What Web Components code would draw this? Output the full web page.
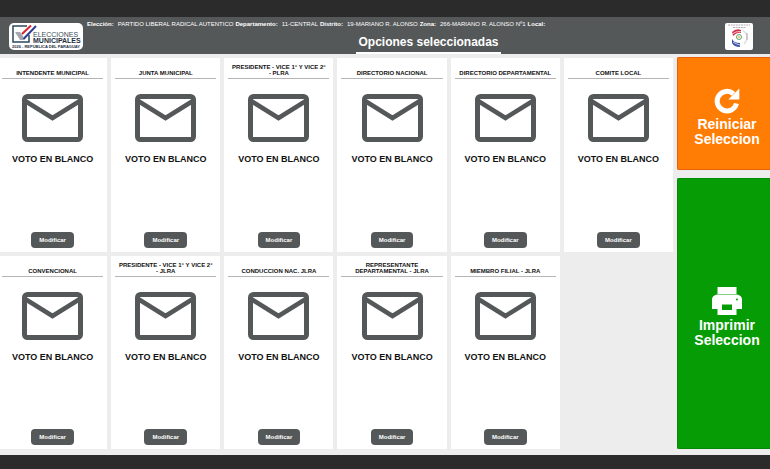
<!DOCTYPE html>
<html lang="es">
<head>
<meta charset="utf-8">
<meta name="viewport" content="width=device-width, initial-scale=1">
<title>Opciones seleccionadas</title>
<style>
  body {
    margin: 0;
    font-family: "Liberation Sans", Arial, sans-serif;
    background: #2b2b2b;
  }
</style>
</head>
<body>
<voting-app></voting-app>

<script>
class ElectionLogo extends HTMLElement {
  constructor() {
    super();
    this.attachShadow({ mode: 'open' });
  }

  connectedCallback() {
    this.shadowRoot.innerHTML = `
      <style>
        :host {
          display: block;
          width: 74px;
          height: 27px;
          border-radius: 5px;
          background: #fff;
        }
        svg { display: block; }
        text { font-family: "Liberation Sans", Arial, sans-serif; }
      </style>
      <svg width="74" height="27" viewBox="0 0 74 27" role="img" aria-label="Elecciones Municipales">
        <path d="M18 3H4v16h16v-7" fill="none" stroke="#2c4a5c" stroke-width="1.5"/>
        <path d="M6 9h5l3 4 1 4h-4z" fill="#a3a8ad"/>
        <path d="M13 11L22 2.500" stroke="#d8232f" stroke-width="2"/>
        <path d="M14.500 16L27 3" stroke="#2d3f96" stroke-width="2"/>
        <text x="24" y="14" font-size="7" fill="#3c4b57">ELECCIONES</text>
        <text x="24" y="20" font-size="7" font-weight="bold" fill="#1d2f3f">MUNICIPALES</text>
        <text x="3" y="25" font-size="4" font-weight="bold" fill="#1d2f3f">2026 - REPÚBLICA DEL PARAGUAY</text>
      </svg>
    `;
  }
}

class PartyLogo extends HTMLElement {
  constructor() {
    super();
    this.attachShadow({ mode: 'open' });
  }

  connectedCallback() {
    this.shadowRoot.innerHTML = `
      <style>
        :host {
          display: block;
          width: 28px;
          height: 27px;
          border-radius: 2px;
          background: #fff;
        }
        svg { display: block; }
      </style>
      <svg width="28" height="27" viewBox="0 0 28 27" role="img" aria-label="Logo">
        <path d="M3 2h22M8 4.500h13" stroke="#b9adb5" stroke-width="1" stroke-dasharray="2 .6"/>
        <path d="M7 9q4-4 9-2v3q-4-1-8 3z" fill="#d5304a"/>
        <path d="M7 11q4-3 9-2.500" stroke="#fff" stroke-width=".7" fill="none"/>
        <path d="M7 16q2 4 8 4v4q-6 0-8-4z" fill="#3c55a8"/>
        <path d="M8 19q3 2 7 3" stroke="#fff" stroke-width=".7" fill="none"/>
        <circle cx="14" cy="14" r="2.500" fill="none" stroke="#63a06c" stroke-width="1"/>
        <circle cx="14" cy="14" r="1" fill="#d9b94a"/>
        <path d="M18 8q4 2 4 6t-3 7" stroke="#dfe1e4" stroke-width="1.500" fill="none"/>
        <path d="M22 10v7" stroke="#b4a3a9" stroke-width="1"/>
      </svg>
    `;
  }
}

class VotingHeader extends HTMLElement {
  constructor() {
    super();
    this.attachShadow({ mode: 'open' });
    this.info = [
      ['Elección:', 'PARTIDO LIBERAL RADICAL AUTENTICO'],
      ['Departamento:', '11-CENTRAL'],
      ['Distrito:', '19-MARIANO R. ALONSO'],
      ['Zona:', '266-MARIANO R. ALONSO Nº1'],
      ['Local:', '']
    ];
  }

  connectedCallback() {
    this.shadowRoot.innerHTML = `
      <style>
        :host {
          display: grid;
          grid-template: "logo info party" auto "logo title title" 1fr / auto 1fr auto;
          column-gap: 4px;
          height: 37px;
          padding-left: 9px;
          background: #555859;
          color: #fff;
        }
        election-logo, party-logo {
          align-self: end;
          margin-bottom: 4px;
        }
        election-logo { grid-area: logo; }
        party-logo {
          grid-row: 1 / 3;
          grid-column: 3;
          margin-right: 17px;
        }
        dl {
          grid-area: info;
          display: flex;
          gap: 2px;
          margin: 3px 0 0;
          font-size: 6px;
          line-height: 8px;
          white-space: nowrap;
        }
        dl div { display: flex; gap: 4px; }
        dt { font-weight: bold; }
        dd { margin: 0; }
        h1 {
          grid-area: title;
          justify-self: center;
          align-self: end;
          margin: 0;
          padding: 0 2px;
          border-bottom: 2px solid #fff;
          font-size: 12px;
          line-height: 19px;
        }
      </style>
      <election-logo></election-logo>
      <dl>
        ${this.info.map(([label, value]) => `<div><dt>${label}</dt><dd>${value}</dd></div>`).join('')}
      </dl>
      <h1><slot></slot></h1>
      <party-logo></party-logo>
    `;
  }
}

class VoteCard extends HTMLElement {
  constructor() {
    super();
    this.attachShadow({ mode: 'open' });
  }

  connectedCallback() {
    this.shadowRoot.innerHTML = `
      <style>
        :host {
          display: flex;
          flex-direction: column;
          align-items: center;
          padding: 0 4px 4px;
          background: #fff;
          color: #111;
          text-align: center;
        }
        h2 {
          display: flex;
          align-items: flex-end;
          justify-content: center;
          align-self: stretch;
          height: 18px;
          margin: 0 0 15px;
          padding-bottom: 2px;
          border-bottom: 1px solid #b5b5b5;
          font-size: 6px;
          line-height: 6px;
          font-weight: bold;
        }
        svg { display: block; }
        p {
          margin: 12px 0 0;
          font-size: 9px;
          line-height: 11px;
          font-weight: bold;
          white-space: nowrap;
        }
        button {
          margin-top: auto;
          padding: 0 8px;
          border: 0;
          border-radius: 4px;
          background: #555859;
          color: #fff;
          font: bold 6px/16px "Liberation Sans", Arial, sans-serif;
          cursor: pointer;
        }
      </style>
      <h2><span><slot></slot></span></h2>
      <svg width="61" height="48" viewBox="0 0 61 48" aria-hidden="true">
        <rect x="2.500" y="2.500" width="56" height="43" rx="3" fill="none" stroke="#555859" stroke-width="5"/>
        <path d="M4 7.500L30.500 24L57 7.500" fill="none" stroke="#555859" stroke-width="4.500"/>
      </svg>
      <p>VOTO EN BLANCO</p>
      <button type="button">Modificar</button>
    `;
    this.shadowRoot.querySelector('button').addEventListener('click', this.handleClick.bind(this));
  }

  handleClick() {
    this.dispatchEvent(new CustomEvent('modify-vote', {
      detail: { category: this.textContent },
      bubbles: true
    }));
  }
}

class ActionButton extends HTMLElement {
  constructor() {
    super();
    this.attachShadow({ mode: 'open' });
  }

  connectedCallback() {
    this.shadowRoot.innerHTML = `
      <style>
        :host { display: grid; }
        button {
          display: flex;
          flex-direction: column;
          align-items: center;
          justify-content: center;
          gap: 3px;
          padding: 8px 0 0 6px;
          border: 1px solid var(--edge);
          border-right: 0;
          border-radius: 2px 0 0 2px;
          background: var(--fill);
          color: #fff;
          font: bold 14px/15px "Liberation Sans", Arial, sans-serif;
          cursor: pointer;
        }
      </style>
      <button type="button">
        <slot name="icon"></slot>
        <span><slot></slot></span>
      </button>
    `;
  }
}

class VotingApp extends HTMLElement {
  constructor() {
    super();
    this.attachShadow({ mode: 'open' });
    this.categories = [
      'INTENDENTE MUNICIPAL',
      'JUNTA MUNICIPAL',
      'PRESIDENTE - VICE 1° Y VICE 2° <span class="list">- PLRA</span>',
      'DIRECTORIO NACIONAL',
      'DIRECTORIO DEPARTAMENTAL',
      'COMITE LOCAL',
      'CONVENCIONAL',
      'PRESIDENTE - VICE 1° Y VICE 2° <span class="list">- JLRA</span>',
      'CONDUCCION NAC. JLRA',
      'REPRESENTANTE DEPARTAMENTAL - JLRA',
      'MIEMBRO FILIAL - JLRA'
    ];
  }

  connectedCallback() {
    this.shadowRoot.innerHTML = `
      <style>
        :host {
          display: flex;
          flex-direction: column;
          box-sizing: border-box;
          min-height: 100vh;
          padding: 17px 0 14px;
          overflow: hidden;
        }
        main {
          flex: 1;
          display: grid;
          grid-template-columns: 1fr 93px;
          gap: 4px;
          padding: 3px 0 6px;
          background: #ededed;
        }
        .cards {
          display: grid;
          grid-template-columns: repeat(6, minmax(0, 1fr));
          grid-auto-rows: 1fr;
          gap: 4px;
          margin: 1px 0 0 -2px;
        }
        .list { white-space: nowrap; }
        .actions {
          display: grid;
          grid-template-rows: 5fr 12fr;
          gap: 8px;
        }
        .reset { --fill: #ff7d05; --edge: #e85f0c; }
        .print { --fill: #059c05; --edge: #058a05; }
      </style>
      <voting-header>Opciones seleccionadas</voting-header>
      <main>
        <div class="cards">
          ${this.categories.map(name => `<vote-card>${name}</vote-card>`).join('')}
        </div>
        <div class="actions">
          <action-button class="reset">
            <svg slot="icon" width="26" height="26" viewBox="0 0 26 26" aria-hidden="true">
              <path d="M22.500 15.500A9.800 9.800 0 1 1 19.500 5.800" fill="none" stroke="#fff" stroke-width="5"/>
              <path d="M25.300 .5v11H14.300z" fill="#fff"/>
            </svg>
            Reiniciar<br>Seleccion
          </action-button>
          <action-button class="print">
            <svg slot="icon" width="30" height="28" viewBox="0 0 30 28" aria-hidden="true">
              <path d="M5.500 0h19v7h-19z" fill="#fff"/>
              <path fill-rule="evenodd" d="M5 7.500h20q5 1 5 5V22h-5.500v6h-19v-6H0v-9.500q0-4 5-5zM10 17.500v5.500h10v-5.500z" fill="#fff"/>
              <circle cx="25" cy="12.500" r="1" fill="#059c05"/>
            </svg>
            Imprimir<br>Seleccion
          </action-button>
        </div>
      </main>
    `;
  }
}

customElements.define('election-logo', ElectionLogo);
customElements.define('party-logo', PartyLogo);
customElements.define('voting-header', VotingHeader);
customElements.define('vote-card', VoteCard);
customElements.define('action-button', ActionButton);
customElements.define('voting-app', VotingApp);
</script>
</body>
</html>
